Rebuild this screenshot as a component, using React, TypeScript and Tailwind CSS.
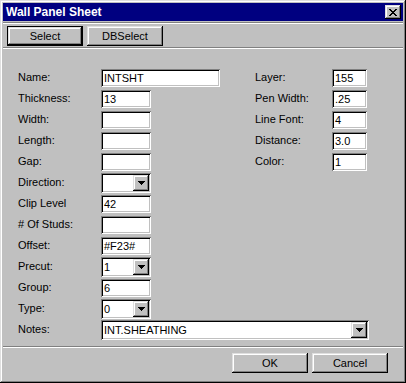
import React from 'react';

// classic 3d borders
const sunken = 'shadow-[inset_1px_1px_#808080,inset_-1px_-1px_#fff,inset_2px_2px_#000,inset_-2px_-2px_#c0c0c0]';
const raised = 'shadow-[inset_-1px_-1px_#000,inset_1px_1px_#dfdfdf,inset_-2px_-2px_#808080,inset_2px_2px_#fff]';

const xPixels = [
  [0, 0], [1, 0], [6, 0], [7, 0],
  [1, 1], [2, 1], [5, 1], [6, 1],
  [2, 2], [3, 2], [4, 2], [5, 2],
  [3, 3], [4, 3],
  [2, 4], [3, 4], [4, 4], [5, 4],
  [1, 5], [2, 5], [5, 5], [6, 5],
  [0, 6], [1, 6], [6, 6], [7, 6]
];

const CloseGlyph = () => (
  <svg width="8" height="7" shapeRendering="crispEdges">
    {xPixels.map(([x, y]) => (
      <rect key={`${x}-${y}`} x={x} y={y} width="1" height="1" fill="#000" />
    ))}
  </svg>
);

const ArrowGlyph = () => (
  <svg width="7" height="4" shapeRendering="crispEdges">
    <rect x="0" y="0" width="7" height="1" fill="#000" />
    <rect x="1" y="1" width="5" height="1" fill="#000" />
    <rect x="2" y="2" width="3" height="1" fill="#000" />
    <rect x="3" y="3" width="1" height="1" fill="#000" />
  </svg>
);

const TextBox = ({ value = '', w }: { value?: string; w: string }) => (
  <div className={`${w} h-[18px] bg-white ${sunken} flex items-center pl-[3px] pt-px leading-none`}>{value}</div>
);

const Combo = ({ value = '', w }: { value?: string; w: string }) => (
  <div className={`${w} h-[20px] bg-white ${sunken} flex items-center p-[2px]`}>
    <span className="flex-1 pl-[1px] leading-none pt-px">{value}</span>
    <div className={`w-[16px] h-[16px] bg-[#c0c0c0] ${raised} flex items-center justify-center`}>
      <ArrowGlyph />
    </div>
  </div>
);

type Field = { label: string; value?: string; combo?: boolean; w?: string };

const leftFields: Field[] = [
  { label: 'Name:', value: 'INTSHT', w: 'w-[119px]' },
  { label: 'Thickness:', value: '13' },
  { label: 'Width:' },
  { label: 'Length:' },
  { label: 'Gap:' },
  { label: 'Direction:', combo: true },
  { label: 'Clip Level', value: '42' },
  { label: '# Of Studs:' },
  { label: 'Offset:', value: '#F23#' },
  { label: 'Precut:', value: '1', combo: true },
  { label: 'Group:', value: '6' },
  { label: 'Type:', value: '0', combo: true }
];

const rightFields: Field[] = [
  { label: 'Layer:', value: '155' },
  { label: 'Pen Width:', value: '.25' },
  { label: 'Line Font:', value: '4' },
  { label: 'Distance:', value: '3.0' },
  { label: 'Color:', value: '1' }
];

const PushButton = ({ children, isDefault }: { children: React.ReactNode; isDefault?: boolean }) =>
  isDefault ? (
    <div className="w-[76px] h-[20px] border border-black">
      <div className={`w-full h-full ${raised} flex items-center justify-center`}>{children}</div>
    </div>
  ) : (
    <div className={`w-[76px] h-[20px] ${raised} flex items-center justify-center`}>{children}</div>
  );

export default function App() {
  return (
    <div className="w-[406px] h-[383px] bg-[#c0c0c0] p-[3px] flex flex-col text-[11px] text-black font-['Liberation_Sans',Arial,sans-serif] shadow-[inset_-1px_-1px_#000,inset_1px_1px_#dfdfdf,inset_-2px_-2px_#808080,inset_2px_2px_#fff]">
      {/* title bar */}
      <div className="h-[18px] bg-[#000080] flex items-center justify-between pl-[3px] pr-[2px] shrink-0">
        <span className="text-white font-bold text-[12px] leading-none">Wall Panel Sheet</span>
        <div className={`w-[16px] h-[14px] bg-[#c0c0c0] ${raised} flex items-center justify-center`}>
          <CloseGlyph />
        </div>
      </div>

      <div className="mt-px h-[2px] border-t border-[#808080] border-b border-b-white shrink-0"></div>

      {/* toolbar */}
      <div className="flex gap-[4px] pl-[4px] pt-[2px] shrink-0">
        <PushButton isDefault>Select</PushButton>
        <PushButton>DBSelect</PushButton>
      </div>

      <div className="mt-px h-[2px] border-t border-[#808080] border-b border-b-white shrink-0"></div>

      {/* form */}
      <div className="pl-[15px] pt-[18px] shrink-0">
        <div className="flex">
          <div className="w-[237px] flex flex-col">
            {leftFields.map((f) => (
              <div key={f.label} className="h-[21px] flex items-center">
                <span className="w-[83px]">{f.label}</span>
                {f.combo ? (
                  <Combo value={f.value} w="w-[50px]" />
                ) : (
                  <TextBox value={f.value} w={f.w ?? 'w-[50px]'} />
                )}
              </div>
            ))}
          </div>
          <div className="flex flex-col">
            {rightFields.map((f) => (
              <div key={f.label} className="h-[21px] flex items-center">
                <span className="w-[77px]">{f.label}</span>
                <TextBox value={f.value} w="w-[35px]" />
              </div>
            ))}
          </div>
        </div>
        <div className="h-[21px] flex items-center">
          <span className="w-[83px]">Notes:</span>
          <Combo value="INT.SHEATHING" w="w-[268px]" />
        </div>
      </div>

      <div className="mt-[6px] h-[2px] border-t border-[#808080] border-b border-b-white shrink-0"></div>

      {/* footer */}
      <div className="flex justify-end gap-[4px] pr-[15px] pt-[5px]">
        <PushButton>OK</PushButton>
        <PushButton>Cancel</PushButton>
      </div>
    </div>
  );
}
